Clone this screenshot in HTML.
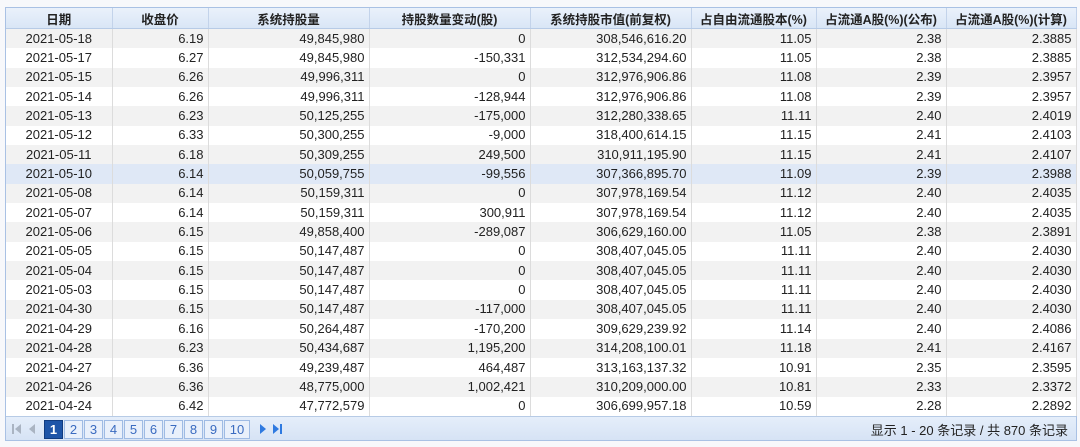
<!DOCTYPE html>
<html><head><meta charset="utf-8"><style>
body{margin:0;background:#f7f8fb;width:1080px;height:447px;overflow:hidden;font-family:"Liberation Sans","Noto Sans CJK SC",sans-serif;font-size:13px;color:#222}
.wrap{position:absolute;left:5px;top:7px;width:1070px;border:1px solid #a9c1e4}
table{border-collapse:collapse;width:1070px;table-layout:fixed}
th{height:20px;background:linear-gradient(#eaf1fb,#d9e6f6);font-weight:bold;border-right:1px solid #c3d3ea;border-bottom:1px solid #b7cbe6;text-align:center;padding:0;font-size:12.5px}
td{height:19.35px;padding:0 4px;border-right:1px solid #dcdcdc;text-align:right;white-space:nowrap;line-height:18px}
td:first-child{text-align:center}
tr:nth-child(even) td{background:#f2f2f2}
tr:nth-child(odd) td{background:#fff}
tr.sel td{background:#dfe8f6}
.pg{height:23px;background:linear-gradient(#e5eefa,#d6e3f5);border-top:1px solid #b7cbe6;position:relative}
.b{position:absolute;top:3px;height:17px;border:1px solid #9fbbe4;color:#3a6bc0;text-align:center;line-height:17px;font-size:13px;background:#e9f0fb}
.b.on{background:#1e55a8;color:#fff;border-color:#113c80;font-weight:bold}
.info{position:absolute;right:8px;top:3px;font-size:13px;color:#222}
</style></head><body>
<div class="wrap">
<table>
<colgroup><col style="width:106px"><col style="width:96px"><col style="width:161px"><col style="width:161px"><col style="width:161px"><col style="width:125px"><col style="width:130px"><col style="width:130px"></colgroup>
<tr><th>日期</th><th>收盘价</th><th>系统持股量</th><th>持股数量变动(股)</th><th>系统持股市值(前复权)</th><th>占自由流通股本(%)</th><th>占流通A股(%)(公布)</th><th>占流通A股(%)(计算)</th></tr>
<tr><td>2021-05-18</td><td>6.19</td><td>49,845,980</td><td>0</td><td>308,546,616.20</td><td>11.05</td><td>2.38</td><td>2.3885</td></tr>
<tr><td>2021-05-17</td><td>6.27</td><td>49,845,980</td><td>-150,331</td><td>312,534,294.60</td><td>11.05</td><td>2.38</td><td>2.3885</td></tr>
<tr><td>2021-05-15</td><td>6.26</td><td>49,996,311</td><td>0</td><td>312,976,906.86</td><td>11.08</td><td>2.39</td><td>2.3957</td></tr>
<tr><td>2021-05-14</td><td>6.26</td><td>49,996,311</td><td>-128,944</td><td>312,976,906.86</td><td>11.08</td><td>2.39</td><td>2.3957</td></tr>
<tr><td>2021-05-13</td><td>6.23</td><td>50,125,255</td><td>-175,000</td><td>312,280,338.65</td><td>11.11</td><td>2.40</td><td>2.4019</td></tr>
<tr><td>2021-05-12</td><td>6.33</td><td>50,300,255</td><td>-9,000</td><td>318,400,614.15</td><td>11.15</td><td>2.41</td><td>2.4103</td></tr>
<tr><td>2021-05-11</td><td>6.18</td><td>50,309,255</td><td>249,500</td><td>310,911,195.90</td><td>11.15</td><td>2.41</td><td>2.4107</td></tr>
<tr class="sel"><td>2021-05-10</td><td>6.14</td><td>50,059,755</td><td>-99,556</td><td>307,366,895.70</td><td>11.09</td><td>2.39</td><td>2.3988</td></tr>
<tr><td>2021-05-08</td><td>6.14</td><td>50,159,311</td><td>0</td><td>307,978,169.54</td><td>11.12</td><td>2.40</td><td>2.4035</td></tr>
<tr><td>2021-05-07</td><td>6.14</td><td>50,159,311</td><td>300,911</td><td>307,978,169.54</td><td>11.12</td><td>2.40</td><td>2.4035</td></tr>
<tr><td>2021-05-06</td><td>6.15</td><td>49,858,400</td><td>-289,087</td><td>306,629,160.00</td><td>11.05</td><td>2.38</td><td>2.3891</td></tr>
<tr><td>2021-05-05</td><td>6.15</td><td>50,147,487</td><td>0</td><td>308,407,045.05</td><td>11.11</td><td>2.40</td><td>2.4030</td></tr>
<tr><td>2021-05-04</td><td>6.15</td><td>50,147,487</td><td>0</td><td>308,407,045.05</td><td>11.11</td><td>2.40</td><td>2.4030</td></tr>
<tr><td>2021-05-03</td><td>6.15</td><td>50,147,487</td><td>0</td><td>308,407,045.05</td><td>11.11</td><td>2.40</td><td>2.4030</td></tr>
<tr><td>2021-04-30</td><td>6.15</td><td>50,147,487</td><td>-117,000</td><td>308,407,045.05</td><td>11.11</td><td>2.40</td><td>2.4030</td></tr>
<tr><td>2021-04-29</td><td>6.16</td><td>50,264,487</td><td>-170,200</td><td>309,629,239.92</td><td>11.14</td><td>2.40</td><td>2.4086</td></tr>
<tr><td>2021-04-28</td><td>6.23</td><td>50,434,687</td><td>1,195,200</td><td>314,208,100.01</td><td>11.18</td><td>2.41</td><td>2.4167</td></tr>
<tr><td>2021-04-27</td><td>6.36</td><td>49,239,487</td><td>464,487</td><td>313,163,137.32</td><td>10.91</td><td>2.35</td><td>2.3595</td></tr>
<tr><td>2021-04-26</td><td>6.36</td><td>48,775,000</td><td>1,002,421</td><td>310,209,000.00</td><td>10.81</td><td>2.33</td><td>2.3372</td></tr>
<tr><td>2021-04-24</td><td>6.42</td><td>47,772,579</td><td>0</td><td>306,699,957.18</td><td>10.59</td><td>2.28</td><td>2.2892</td></tr>
</table>
<div class="pg">
<svg style="position:absolute;left:6px;top:6px" width="30" height="12"><rect x="0" y="1" width="2" height="10" fill="#aab4c2"/><path d="M9 1 L3 6 L9 11Z" fill="#aab4c2"/><path d="M23 1 L17 6 L23 11Z" fill="#aab4c2"/></svg>
<div class="b on" style="left:38px;width:17px">1</div>
<div class="b" style="left:58px;width:17px">2</div>
<div class="b" style="left:78px;width:17px">3</div>
<div class="b" style="left:98px;width:17px">4</div>
<div class="b" style="left:118px;width:17px">5</div>
<div class="b" style="left:138px;width:17px">6</div>
<div class="b" style="left:158px;width:17px">7</div>
<div class="b" style="left:178px;width:17px">8</div>
<div class="b" style="left:198px;width:17px">9</div>
<div class="b" style="left:218px;width:24px">10</div>
<svg style="position:absolute;left:253px;top:6px" width="26" height="12"><path d="M1 1 L7 6 L1 11Z" fill="#2f7ae0"/><path d="M14 1 L20 6 L14 11Z" fill="#2f7ae0"/><rect x="21" y="1" width="2" height="10" fill="#2f7ae0"/></svg>
<div class="info">显示 1 - 20 条记录 / 共 870 条记录</div>
</div>
</div>
</body></html>
